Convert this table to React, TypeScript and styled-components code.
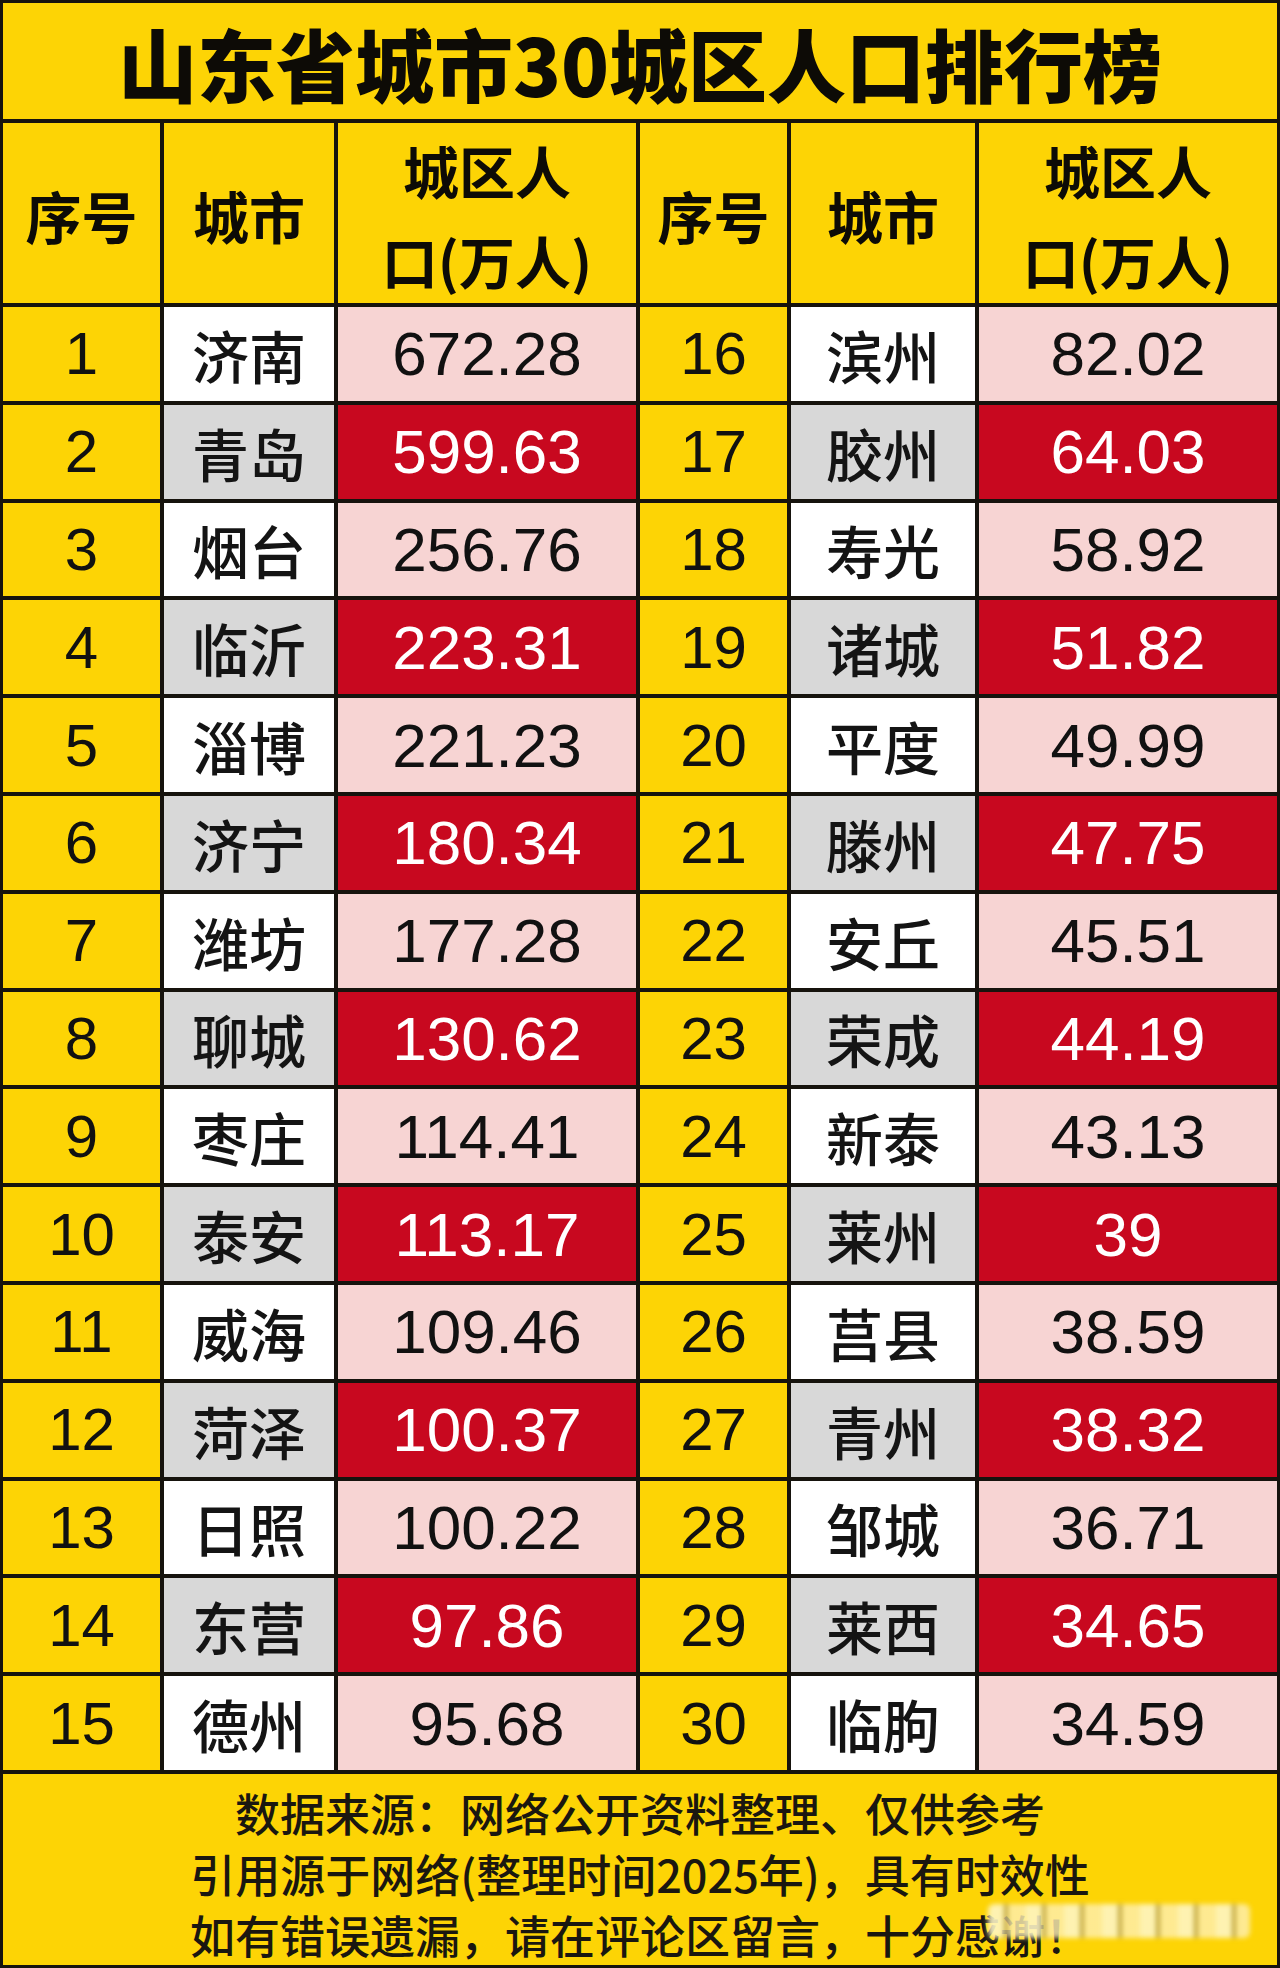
import React from "react";
import styled, { createGlobalStyle } from "styled-components";

const INK = "#16130d";
const YELLOW = "#fdd405";
const CJK = `"Noto Sans CJK SC", "Noto Sans", sans-serif`;
const LATIN = `"Liberation Sans", Arial, "Noto Sans CJK SC", sans-serif`;

type Row = [number, string, string];

const left: Row[] = [
  [1, "济南", "672.28"],
  [2, "青岛", "599.63"],
  [3, "烟台", "256.76"],
  [4, "临沂", "223.31"],
  [5, "淄博", "221.23"],
  [6, "济宁", "180.34"],
  [7, "潍坊", "177.28"],
  [8, "聊城", "130.62"],
  [9, "枣庄", "114.41"],
  [10, "泰安", "113.17"],
  [11, "威海", "109.46"],
  [12, "菏泽", "100.37"],
  [13, "日照", "100.22"],
  [14, "东营", "97.86"],
  [15, "德州", "95.68"],
];

const right: Row[] = [
  [16, "滨州", "82.02"],
  [17, "胶州", "64.03"],
  [18, "寿光", "58.92"],
  [19, "诸城", "51.82"],
  [20, "平度", "49.99"],
  [21, "滕州", "47.75"],
  [22, "安丘", "45.51"],
  [23, "荣成", "44.19"],
  [24, "新泰", "43.13"],
  [25, "莱州", "39"],
  [26, "莒县", "38.59"],
  [27, "青州", "38.32"],
  [28, "邹城", "36.71"],
  [29, "莱西", "34.65"],
  [30, "临朐", "34.59"],
];

const GlobalStyle = createGlobalStyle`
  html, body {
    margin: 0;
    padding: 0;
    background: ${INK};
  }
  * {
    box-sizing: border-box;
  }
`;

const Frame = styled.div`
  width: 1280px;
  height: 1968px;
  border: 3px solid ${INK};
  background: ${INK};
  display: flex;
  flex-direction: column;
  gap: 4px;
`;

const Title = styled.h1`
  margin: 0;
  height: 116px;
  background: ${YELLOW};
  display: flex;
  align-items: center;
  justify-content: center;
  font-family: ${CJK};
  font-weight: 900;
  font-size: 79px;
  color: #0d0b06;
  padding-top: 2px;
`;

const Board = styled.div`
  display: grid;
  grid-template-columns: 157px 170px 298px 147px 184px 298px;
  grid-template-rows: 180px repeat(15, 93.8px);
  gap: 4px;
`;

const HeadCell = styled.div`
  background: ${YELLOW};
  display: flex;
  flex-direction: column;
  align-items: center;
  justify-content: center;
  font-family: ${CJK};
  font-weight: 700;
  font-size: 56px;
  line-height: 90px;
  color: #0d0b06;
  padding-top: 4px;
`;

const IndexCell = styled.div`
  background: ${YELLOW};
  display: flex;
  align-items: center;
  justify-content: center;
  font-family: ${LATIN};
  font-size: 60px;
  color: #111;
`;

const CityCell = styled.div<{ $shade: boolean }>`
  background: ${(p) => (p.$shade ? "#d8d8d8" : "#ffffff")};
  display: flex;
  align-items: center;
  justify-content: center;
  font-family: ${CJK};
  font-weight: 500;
  font-size: 57px;
  color: #141414;
`;

const ValueCell = styled.div<{ $hot: boolean }>`
  background: ${(p) => (p.$hot ? "#c8081f" : "#f7d4d3")};
  display: flex;
  align-items: center;
  justify-content: center;
  font-family: ${LATIN};
  font-size: 62px;
  color: ${(p) => (p.$hot ? "#ffffff" : "#111111")};
`;

const Footer = styled.div`
  position: relative;
  flex: 1;
  background: ${YELLOW};
  display: flex;
  flex-direction: column;
  align-items: center;
  justify-content: center;
  font-family: ${CJK};
  font-weight: 500;
  font-size: 45px;
  line-height: 61px;
  color: #1a1710;
  padding-top: 8px;
`;

const Smudge = styled.div`
  position: absolute;
  left: 985px;
  top: 130px;
  width: 262px;
  height: 34px;
  border-radius: 6px;
  background: repeating-linear-gradient(
      90deg,
      rgba(255, 248, 205, 0.75) 0 16px,
      rgba(120, 95, 20, 0.45) 16px 20px,
      rgba(255, 240, 180, 0.6) 20px 38px
    ),
    rgba(250, 235, 170, 0.55);
  filter: blur(2.5px);
`;

function renderHead() {
  const two = (
    <>
      <span>城区人</span>
      <span>口(万人)</span>
    </>
  );
  return (
    <>
      <HeadCell>序号</HeadCell>
      <HeadCell>城市</HeadCell>
      <HeadCell>{two}</HeadCell>
      <HeadCell>序号</HeadCell>
      <HeadCell>城市</HeadCell>
      <HeadCell>{two}</HeadCell>
    </>
  );
}

export default function App() {
  return (
    <>
      <GlobalStyle />
      <Frame>
        <Title>山东省城市30城区人口排行榜</Title>
        <Board>
          {renderHead()}
          {left.map((l, i) => {
            const r = right[i];
            const even = i % 2 === 1;
            return (
              <React.Fragment key={l[0]}>
                <IndexCell>{l[0]}</IndexCell>
                <CityCell $shade={even}>{l[1]}</CityCell>
                <ValueCell $hot={even}>{l[2]}</ValueCell>
                <IndexCell>{r[0]}</IndexCell>
                <CityCell $shade={even}>{r[1]}</CityCell>
                <ValueCell $hot={even}>{r[2]}</ValueCell>
              </React.Fragment>
            );
          })}
        </Board>
        <Footer>
          <span>数据来源：网络公开资料整理、仅供参考</span>
          <span>引用源于网络(整理时间2025年)，具有时效性</span>
          <span>如有错误遗漏，请在评论区留言，十分感谢！</span>
          <Smudge />
        </Footer>
      </Frame>
    </>
  );
}
